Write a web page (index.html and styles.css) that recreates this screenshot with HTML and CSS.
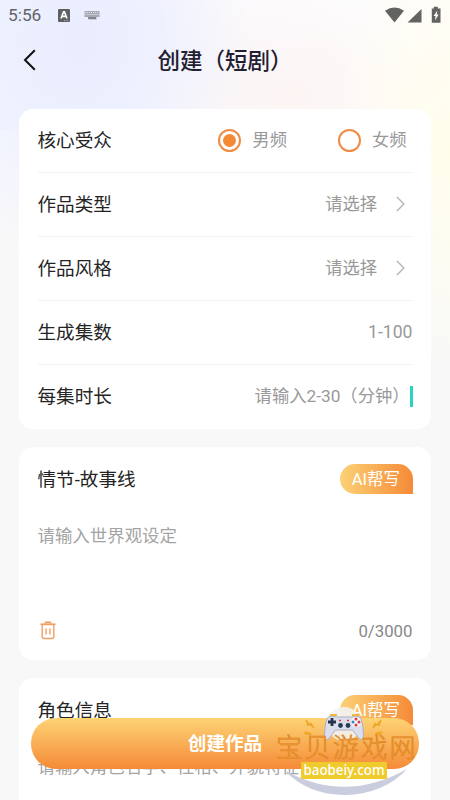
FILE: index.html
```html
<!DOCTYPE html>
<html lang="zh-CN">
<head>
<meta charset="utf-8">
<title>创建（短剧）</title>
<link rel="stylesheet" href="styles.css">
</head>
<body>
<div class="screen">
  <div class="status">
    <span class="time">5:56</span>
    <svg class="ime" width="12" height="13" viewBox="0 0 12 13"><rect width="12" height="13" rx="1" fill="#5f6064"/><path d="M3 9.500 5.600 2.800h.8L9 9.500M4 7.400h4" fill="none" stroke="#fff" stroke-width="1.700"/><path d="M6 11.600h5" stroke="#aaa" stroke-dasharray="1 .6"/></svg>
    <svg class="keyboard" width="16" height="9" viewBox="0 0 16 9"><path d="M.5 0h15v6h-3v2.500h-8V6H.5z" fill="#a6a8b2"/><path d="M1 1.500h14M1.500 3.500h14" stroke="#e4e6f0" stroke-dasharray="1 1"/><path d="M4 7h8" stroke="#777b85" stroke-width="1.500"/></svg>
    <svg class="signals" width="58" height="18" viewBox="0 0 58 18"><path d="M1 4.800Q10.500-1.800 20 4.800L10.500 16.500zM23.500 16.500 37.500 3v13.500zM49.800 2.500V.8h4v1.700h2.700v14.300h-8.700V2.500z" fill="#636361"/><path d="m53.400 4.500-3.800 5.600h2l-.6 4.500 3.700-6h-2z" fill="#fff"/></svg>
  </div>
  <header class="nav">
    <svg class="back" width="14" height="22" viewBox="0 0 14 22"><path d="M11.800 1.300 2 11l9.800 9.700" fill="none" stroke="#111" stroke-width="2"/></svg>
    <h1>创建（短剧<span class="paren">）</span></h1>
  </header>
  <main>
    <section class="card form">
      <div class="row"><span class="label">核心受众</span><span class="radio on"></span><span class="option first">男频</span><span class="radio"></span><span class="option">女频</span></div>
      <div class="row"><span class="label">作品类型</span><span class="value">请选择</span><svg class="chevron" width="9" height="16" viewBox="0 0 9 16"><path d="m1 1 6.800 7L1 15" fill="none" stroke="#b9b9b9" stroke-width="1.500"/></svg></div>
      <div class="row"><span class="label">作品风格</span><span class="value">请选择</span><svg class="chevron" width="9" height="16" viewBox="0 0 9 16"><path d="m1 1 6.800 7L1 15" fill="none" stroke="#b9b9b9" stroke-width="1.500"/></svg></div>
      <div class="row"><span class="label">生成集数</span><span class="value latin">1-100</span></div>
      <div class="row"><span class="label">每集时长</span><span class="value">请输入2-30（分钟）</span><span class="caret"></span></div>
    </section>
    <section class="card story">
      <div class="head"><span class="label">情节-故事线</span><span class="ai">AI帮写</span></div>
      <p class="hint">请输入世界观设定</p>
      <div class="foot"><svg width="16" height="19" viewBox="0 0 16 19"><path d="M.5 3.300h15" stroke="#f0a064" stroke-width="1.800"/><path d="M5.500 2.800V1.200h5v1.600M2.200 4v11.500q0 2 2 2h7.600q2 0 2-2V4M6.100 7.500v6M9.900 7.500v6" fill="none" stroke="#f0a064" stroke-width="1.400"/></svg><span>0/3000</span></div>
    </section>
    <section class="card story">
      <div class="head"><span class="label">角色信息</span><span class="ai">AI帮写</span></div>
      <p class="hint">请输入角色名字、性格、外貌特征</p>
    </section>
  </main>
  <div class="create">创建作品</div>
  <div class="watermark">
    <svg width="150" height="100" viewBox="270 700 150 100">
      <circle cx="344" cy="724" r="17" fill="#f3f2f1" opacity=".9"/>
      <path d="M284 770Q345 804 407 769Q384 794 345 795Q308 795 284 770Z" fill="#c9cddd"/>
      <path d="m306 720 4 5 1-2 3 5-5-4-1 2zM305 732l5 1 1 2-6-1zM381 720l-5 5-1-2-2 5 5-4 1 2zM382 732l-6 1-1 2 6-1z" fill="#f5b72a" stroke="#eba020"/>
      <path d="M328.500 717q4-2 8 0h15q4-2 8 0 3.500 2 4 20 0 4-4 2l-7-9h-17l-7 9q-4 2-4-2 .5-18 4-20z" fill="#dcdfeb" stroke="#abb1c5"/>
      <path d="M330 715h7M352 715h7" stroke="#f0b83b" stroke-width="2"/>
      <path d="M328 722h8M332 718v8" stroke="#27324b" stroke-width="2.800"/>
      <circle cx="340.500" cy="725.500" r="2.400" fill="#263c54"/><circle cx="348" cy="725.500" r="2.400" fill="#263c54"/>
      <path d="M339 720.500h2M347 720.500h2" stroke="#de3845" stroke-width="1.500"/>
      <circle cx="356" cy="722" r="5" fill="#f4f5fb"/><circle cx="356" cy="719" r="1.500" fill="#de3845"/><circle cx="356" cy="725" r="1.500" fill="#de3845"/><circle cx="353" cy="722" r="1.500" fill="#3489b6"/><circle cx="359" cy="722" r="1.500" fill="#de3845"/>
    </svg>
    <span class="site">宝贝游戏网</span>
    <span class="domain"><span>baobeiy.com</span></span>
  </div>
</div>
</body>
</html>
```
FILE: styles.css
```css
* { box-sizing: border-box; }
body { margin: 0; font-family: Roboto, "Noto Sans CJK SC", sans-serif; }
.screen {
  position: relative; height: 800px; overflow: hidden;
  background:
    radial-gradient(ellipse 170px 210px at 80px 40px, #e9edfe 0, #ebeffecc 45%, transparent 100%),
    radial-gradient(ellipse 120px 220px at 450px 150px, #fffeeb 0, #fffdefcc 40%, transparent 100%),
    radial-gradient(ellipse 150px 100px at 290px 95px, #fcf5f4 0, transparent 100%),
    linear-gradient(to right, #f3f4fe 0, #fbf9fc 200px, #fefdfc 450px) 0 0 / 100% 130px no-repeat,
    linear-gradient(#f9f9fd 130px, #f8f8f8 300px);
}
.status { height: 30px; display: flex; align-items: center; padding: 0 8px; color: #626369; }
.time { width: 50px; font-size: 17.300px; line-height: 30px; }
.keyboard { margin-left: 14px; }
.signals { margin-left: auto; }
.nav { height: 60px; display: grid; grid-template-columns: 58px 1fr 58px; align-items: center; }
.back { margin-left: 23px; }
h1 { margin: 0; padding-top: 2px; text-align: center; font-size: 22.500px; line-height: 30px; font-weight: 500; color: #1f2032; }
main { padding: 18.500px 19px 0; display: flex; flex-direction: column; gap: 18.500px; }
.card { background: #fff; border-radius: 14px; padding: 0 18.500px; }
.row { height: 64px; display: flex; align-items: center; border-bottom: 1px solid #f2f2f2; }
.row:last-child { height: 63px; border-bottom: 0; }
.form { height: 320px; }
.label { margin-right: auto; padding-bottom: 3px; font-size: 18.600px; color: #242424; }
.value, .option { padding-bottom: 3px; font-size: 17.300px; color: #999; }
.value.latin { padding-bottom: 1px; font-size: 17.600px; }
.radio { width: 23px; height: 23px; border: 2px solid #ef8b43; border-radius: 50%; display: grid; place-items: center; margin-right: 11px; }
.radio.on::after { content: ""; width: 13px; height: 13px; border-radius: 50%; background: #f58a34; }
.option { margin-right: 6px; }
.option.first { margin-right: 51px; }
.chevron { margin: 0 8px 0 18.500px; }
.caret { width: 3px; height: 21px; background: #29d2c2; }
.story { height: 212.500px; padding-top: 16.500px; }
.head { height: 30px; display: flex; align-items: center; }
.ai { width: 73px; height: 30px; border-radius: 15px 15px 0 15px; background: linear-gradient(90deg, #fcd176, #f58a37); color: #fff; font-size: 16.500px; line-height: 31px; text-align: center; }
.hint { margin: 29px 0 0; height: 26px; line-height: 26px; font-size: 17.450px; color: #a4a4a4; white-space: nowrap; }
.foot { margin-top: 70px; height: 24px; padding-left: 2px; display: flex; align-items: center; justify-content: space-between; font-size: 16.800px; color: #888; }
.create { position: absolute; left: 31px; top: 718px; width: 388px; height: 50.500px; border-radius: 25px; background: linear-gradient(#fdd374, #f58a38); color: #fff; font-size: 18.600px; line-height: 52px; font-weight: 700; text-align: center; }
.watermark { position: absolute; left: 270px; top: 700px; width: 150px; height: 100px; }
.site { position: absolute; left: 6px; top: 35px; font-size: 26px; line-height: 27px; font-weight: 300; letter-spacing: 2.400px; color: #f19a35; -webkit-text-stroke: .6px #dc8420; white-space: nowrap; }
.domain { position: absolute; left: 31px; top: 62px; width: 86px; height: 17px; display: flex; justify-content: center; background: #efcb2d; color: #fff; font: 500 14.500px/15px "Noto Sans", sans-serif; }
.domain span { transform: scaleX(.92); }
```
